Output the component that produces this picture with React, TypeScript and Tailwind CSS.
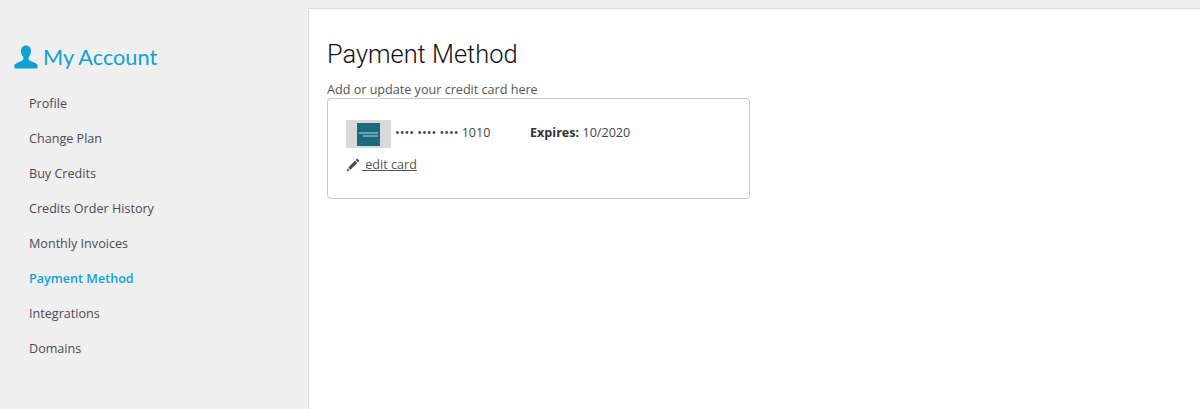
const links = [
  "Profile",
  "Change Plan",
  "Buy Credits",
  "Credits Order History",
  "Monthly Invoices",
  "Payment Method",
  "Integrations",
  "Domains",
];

function UserIcon() {
  return (
    <svg viewBox="0 0 24 24" className="w-[24px] h-[24px] fill-[#0ea2d3]">
      <path d="M12 0.5c3.2 0 5 2.400 5 5.600 0 2.400-1 4.600-2.300 6v2.200c0 .8 1.200 1.400 3.600 2.400 2.800 1.100 5.200 2 5.200 3.800v3h-23v-3c0-1.800 2.400-2.700 5.200-3.800 2.400-1 3.600-1.600 3.600-2.400v-2.200c-1.300-1.400-2.300-3.600-2.300-6 0-3.200 1.800-5.600 5-5.600z" />
    </svg>
  );
}

function PencilIcon() {
  return (
    <svg viewBox="0 0 14 14" className="w-[14px] h-[14px] fill-[#54483f]">
      <path d="M11.200.6l2.200 2.200-1.500 1.500-2.200-2.200zM9 2.800l2.200 2.200-6.700 6.700-2.200-2.200zM1.800 10.200l2 2-3.200 1.200z" />
    </svg>
  );
}

function AmexLogo() {
  return (
    <div className="w-[45px] h-[28px] bg-[#d9d9d9] flex items-center justify-center">
      <div className="w-[23px] h-[23px] bg-[#1a6a80] flex flex-col justify-center gap-px px-[2px]">
        <div className="h-[2px] bg-[#6f9fae]" />
        <div className="h-[2px] bg-[#6f9fae] ml-[4px]" />
      </div>
    </div>
  );
}

export default function App() {
  return (
    <div className="h-[409px] overflow-hidden bg-[#f0eff0] pt-2 flex font-['Open_Sans',sans-serif] text-[12.6px] text-[#444]">
      <aside className="w-[308px] shrink-0 pt-[32px]">
        <h2 className="flex items-center gap-[5px] pl-[14px] text-[21.7px] leading-[34px] text-[#0ea2d3] font-['Lato',sans-serif]">
          <UserIcon />
          My Account
        </h2>
        <ul className="mt-[12px] pl-[29px]">
          {links.map((link) => (
            <li
              key={link}
              className={
                link === "Payment Method"
                  ? "h-[35px] leading-[35px] font-semibold text-[#0ea2d3]"
                  : "h-[35px] leading-[35px] text-[#4a4a55]"
              }
            >
              {link}
            </li>
          ))}
        </ul>
      </aside>
      <main className="flex-1 bg-white border-l border-t border-[#dcdcdc] pl-[18px] pt-[29px]">
        <h1 className="text-[25.4px] leading-[32px] font-light text-[#111] font-['Roboto',sans-serif]">Payment Method</h1>
        <p className="mt-[11px] leading-[17px] text-[#555]">Add or update your credit card here</p>
        <div className="w-[423px] h-[101px] border border-[#c8c8c8] rounded-[4px] pt-[21px] pl-[18px]">
          <div className="flex items-center h-[28px]">
            <AmexLogo />
            <span className="ml-[4px] w-[135px] -translate-y-px">•••• •••• •••• 1010</span>
            <span className="-translate-y-px"><b className="font-bold text-[#333]">Expires:</b> 10/2020</span>
          </div>
          <a className="mt-[8px] flex items-center underline text-[#555] leading-[18px]">
            <PencilIcon />
            <span className="whitespace-pre pl-[2px]"> edit card</span>
          </a>
        </div>
      </main>
    </div>
  );
}
